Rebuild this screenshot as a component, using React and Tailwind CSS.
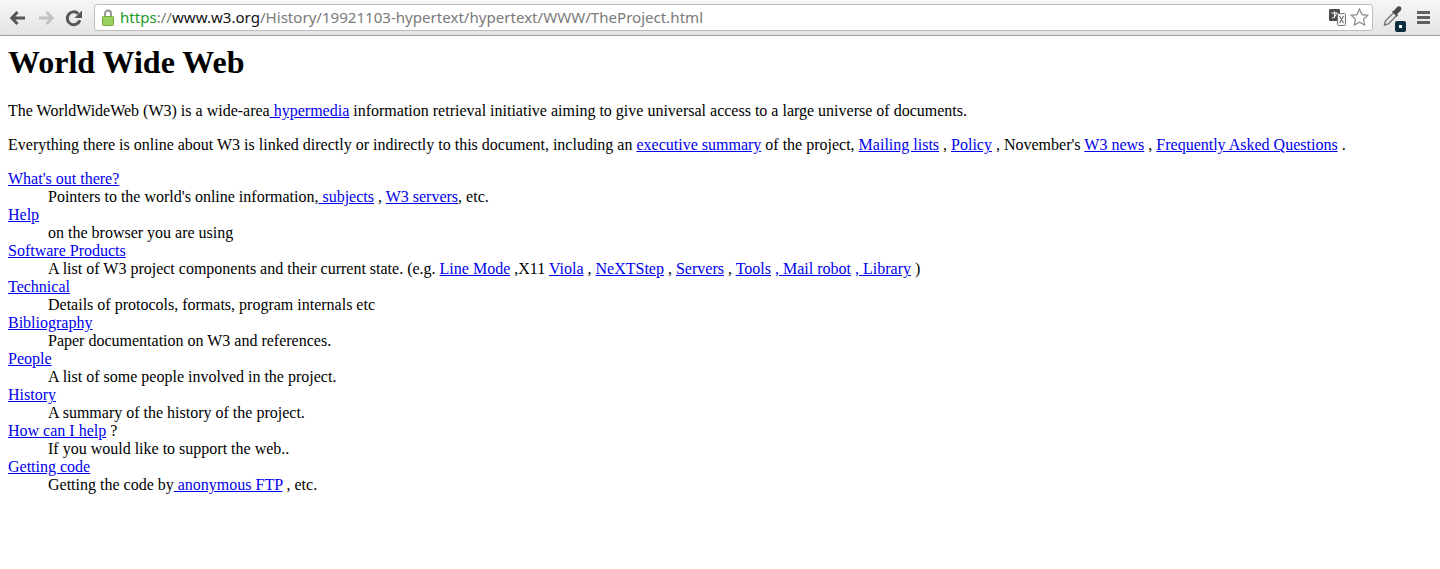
const SERIF = "font-['Liberation_Serif','Times_New_Roman',serif]";

const items = [
  {
    term: <A>What's out there?</A>,
    desc: (
      <>
        Pointers to the world's online information,<A> subjects</A> , <A>W3 servers</A>, etc.
      </>
    ),
  },
  { term: <A>Help</A>, desc: 'on the browser you are using' },
  {
    term: <A>Software Products</A>,
    desc: (
      <>
        A list of W3 project components and their current state. (e.g. <A>Line Mode</A> ,X11 <A>Viola</A> ,{' '}
        <A>NeXTStep</A> , <A>Servers</A> , <A>Tools</A> <A>, Mail robot</A> <A>, Library</A> )
      </>
    ),
  },
  { term: <A>Technical</A>, desc: 'Details of protocols, formats, program internals etc' },
  { term: <A>Bibliography</A>, desc: 'Paper documentation on W3 and references.' },
  { term: <A>People</A>, desc: 'A list of some people involved in the project.' },
  { term: <A>History</A>, desc: 'A summary of the history of the project.' },
  {
    term: (
      <>
        <A>How can I help</A> ?
      </>
    ),
    desc: 'If you would like to support the web..',
  },
  {
    term: <A>Getting code</A>,
    desc: (
      <>
        Getting the code by<A> anonymous FTP</A> , etc.
      </>
    ),
  },
];

function A({ children }) {
  return (
    <a href="#" className="text-[#0000ee] underline whitespace-pre">
      {children}
    </a>
  );
}

function Toolbar() {
  return (
    <div className="h-9 flex items-center bg-gradient-to-b from-[#f6f6f6] to-[#e4e4e4] border-b border-[#a0a0a0]">
      <div className="w-[94px] shrink-0 flex items-center pl-[9px] gap-[10px]">
        <svg width="18" height="16" viewBox="0 0 18 16">
          <path d="M8.500 2 2.800 8l5.700 6M3.500 8H16" fill="none" stroke="#565656" strokeWidth="3" />
        </svg>
        <svg width="18" height="16" viewBox="0 0 18 16">
          <path d="M9.500 2l5.700 6-5.700 6M14.500 8H2" fill="none" stroke="#c2c2c2" strokeWidth="3" />
        </svg>
        <svg width="18" height="18" viewBox="0 0 18 18">
          <path d="M14.800 11.200A6.400 6.400 0 1 1 13.200 4.700" fill="none" stroke="#565656" strokeWidth="3" />
          <path d="M17 1.500v7.500H9.500z" fill="#565656" />
        </svg>
      </div>
      <div className="w-[1279px] h-[27px] -mt-px flex items-center bg-white border border-[#bdbdbd] rounded-[3px] pl-[7px] pr-[3px] font-['Noto_Sans',sans-serif] text-[15.08px]">
        <svg width="12" height="17" viewBox="0 0 12 17" className="shrink-0">
          <path d="M3 8V4.500a3 3 0 0 1 6 0V8" fill="none" stroke="#8f8f8f" strokeWidth="1.800" />
          <rect x="0.500" y="7.500" width="11" height="9" rx="1" fill="#9ad05c" stroke="#71a93c" />
        </svg>
        <span className="ml-[6px] whitespace-pre">
          <span className="text-[#1a9a2c]">https</span>
          <span className="text-[#7a7a7a]">://</span>
          <span className="text-[#111111]">www.w3.org</span>
          <span className="text-[#7a7a7a]">/History/19921103-hypertext/hypertext/WWW/TheProject.html</span>
        </span>
        <div className="ml-auto flex items-center gap-[4px]">
          <svg width="17" height="17" viewBox="0 0 17 17">
            <rect x="0" y="0" width="11" height="12" rx="1" fill="#4c4c4c" />
            <rect x="8.500" y="4.500" width="8" height="12" rx="1" fill="#f4f4f4" stroke="#777777" />
            <path d="M10.500 7l4 7M14.500 7l-4 7" fill="none" stroke="#555555" />
            <path d="M2.500 4h6M5.500 2.500V9M3 9c2 0 4-2 4.500-5" stroke="#ffffff" fill="none" />
          </svg>
          <svg width="19" height="18" viewBox="0 0 19 18">
            <path
              d="M9.500 1.200l2.500 5.400 5.900.7-4.400 4 1.200 5.800-5.200-2.900-5.200 2.900 1.200-5.800-4.400-4 5.900-.7z"
              fill="#ffffff"
              stroke="#8c8c8c"
              strokeWidth="1.200"
            />
          </svg>
        </div>
      </div>
      <div className="flex-1 flex items-center pl-[10px]">
        <div className="relative w-[21px] h-[27px]">
          <svg width="20" height="21" viewBox="0 0 20 21" className="mt-[1px]">
            <path d="M1.500 20l.8-4 8.700-8.700 3 3-8.700 8.700z" fill="#e8e8e8" stroke="#707070" strokeWidth="1.300" />
            <path d="M10.500 6l3.500-3.700c1.200-1.200 2.700-1.200 3.700-.2s1 2.500-.2 3.700l-3.500 3.500 1 1-1.200 1.200-5-5z" fill="#484848" />
          </svg>
          <span className="absolute left-3 top-[17px] w-[11px] h-[11px] rounded-[2px] bg-[#0d2f3f] flex items-center justify-center">
            <span className="w-[3px] h-[3px] bg-white" />
          </span>
        </div>
        <div className="ml-[13px] w-[13px] flex flex-col gap-[2px]">
          <span className="h-[3px] bg-[#5f5f5f]" />
          <span className="h-[3px] bg-[#5f5f5f]" />
          <span className="h-[3px] bg-[#5f5f5f]" />
        </div>
      </div>
    </div>
  );
}

export default function App() {
  return (
    <div className={`min-h-[569px] bg-white text-black ${SERIF} text-base leading-[18px]`}>
      <Toolbar />
      <div className="p-2">
        <h1 className="text-[32px] leading-[37px] font-bold mb-[21px]">World Wide Web</h1>
        <p className="mb-4">
          The WorldWideWeb (W3) is a wide-area<A> hypermedia</A> information retrieval initiative aiming to give
          universal access to a large universe of documents.
        </p>
        <p className="mb-4">
          Everything there is online about W3 is linked directly or indirectly to this document, including an{' '}
          <A>executive summary</A> of the project, <A>Mailing lists</A> , <A>Policy</A> , November's <A>W3 news</A> ,{' '}
          <A>Frequently Asked Questions</A> .
        </p>
        <dl>
          {items.map((item, idx) => (
            <div key={idx}>
              <dt>{item.term}</dt>
              <dd className="ml-10">{item.desc}</dd>
            </div>
          ))}
        </dl>
      </div>
    </div>
  );
}
